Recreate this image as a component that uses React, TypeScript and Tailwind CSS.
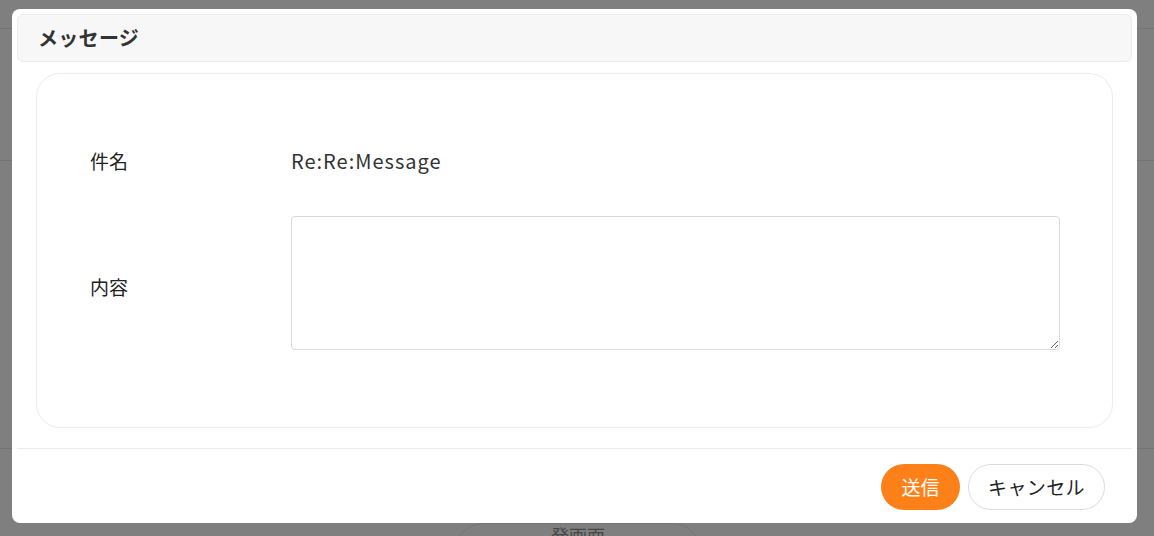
import React from 'react';

const font = { fontFamily: '"Noto Sans CJK JP", "Noto Sans", sans-serif' };

export default function App() {
  return (
    <div className="relative w-[1154px] h-[536px] overflow-hidden bg-[#7f7f7f]" style={font}>
      {/* page behind the overlay */}
      <div className="flex flex-col">
        <div className="h-[29px] border-b border-[#737373]" />
        <div className="h-[132px] border-b border-[#737373]" />
        <div className="h-[288px] border-b border-[#737373]" />
        <div className="flex justify-center pt-[74px] pl-[2px]">
          <div className="w-[248px] h-[60px] rounded-full border border-[#6e6e6e] flex justify-center pt-[1px] text-[18px] leading-[20px] text-[#222] opacity-60">
            発画面
          </div>
        </div>
      </div>

      {/* modal */}
      <div className="absolute left-[12px] top-[9px] w-[1125px] h-[514px] bg-white rounded-[8px] p-[5px] flex flex-col">
        <div className="h-[48px] bg-[#f7f7f7] border border-[#ececec] rounded-[6px] flex items-center pl-[20px]">
          <h2 className="text-[20px] font-bold text-[#333] tracking-[0.3px]">メッセージ</h2>
        </div>

        <div className="mt-[11px] mx-[19px] h-[355px] border border-[#ececec] rounded-[24px] pt-[73px] pl-[53px]">
          <div className="flex items-center h-[28px]">
            <span className="w-[201px] text-[19px] text-[#222]">件名</span>
            <span className="text-[20px] text-[#333] tracking-[1px]">Re:Re:Message</span>
          </div>
          <div className="flex items-center mt-[41px]">
            <span className="w-[201px] text-[19px] text-[#222] pt-[8px]">内容</span>
            <textarea className="w-[769px] h-[134px] border border-[#d9d9d9] rounded-[4px] outline-none p-2 text-[16px]" />
          </div>
        </div>

        <div className="mt-[20px] border-t border-[#ececec] flex justify-end gap-[8px] pt-[15px] pr-[27px]">
          <button className="w-[79px] h-[46px] rounded-full bg-[#fd8118] text-white text-[19px]">送信</button>
          <button className="w-[137px] h-[46px] rounded-full border border-[#dcdcdc] bg-white text-[#222] text-[19px] tracking-[0.4px]">キャンセル</button>
        </div>
      </div>
    </div>
  );
}
